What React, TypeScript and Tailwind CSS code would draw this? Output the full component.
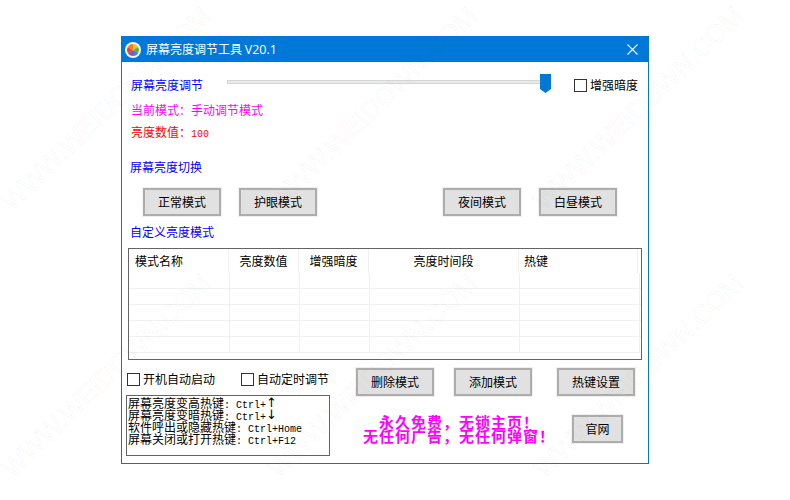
import React from "react";

const Btn = ({ children, className = "" }: { children: React.ReactNode; className?: string }) => (
  <button className={`h-[28px] w-[78px] shrink-0 border-2 border-[#adadad] bg-[#e1e1e1] text-[12px] leading-none text-black ring-1 ring-[#f0f0f0] ${className}`}>
    {children}
  </button>
);

const Check = ({ label, className = "" }: { label: string; className?: string }) => (
  <div className={`flex items-center gap-[3px] ${className}`}>
    <span className="h-[13px] w-[13px] shrink-0 border border-[#333333] bg-white" />
    <span className="text-[12px] leading-none text-black">{label}</span>
  </div>
);

const Logo = () => (
  <svg width="16" height="16" viewBox="0 0 16 16" className="shrink-0">
    <circle cx="8" cy="8" r="8" fill="#f4f4f4" />
    <path d="M8 8 L8 2 A6 6 0 0 1 13.2 5 Z" fill="#f5c518" />
    <path d="M8 8 L13.2 5 A6 6 0 0 1 13.2 11 Z" fill="#5cb531" />
    <path d="M8 8 L13.2 11 A6 6 0 0 1 8 14 Z" fill="#3f7fd0" />
    <path d="M8 8 L8 14 A6 6 0 0 1 2.8 11 Z" fill="#9a4fa8" />
    <path d="M8 8 L2.8 11 A6 6 0 0 1 2.8 5 Z" fill="#e2403f" />
    <path d="M8 8 L2.8 5 A6 6 0 0 1 8 2 Z" fill="#f57c1f" />
  </svg>
);

const cols = ["w-[101px]", "w-[70px]", "w-[70px]", "w-[150px]", "w-[120px]"];

const Row = () => (
  <div className="flex h-[16px] border-b border-[#f0f0f0]">
    {cols.map((c, i) => (
      <div key={i} className={`${c} shrink-0 border-r border-[#f0f0f0]`} />
    ))}
  </div>
);

const marks = [
  "left-[6px] top-[192px]",
  "left-[272px] top-[192px]",
  "left-[538px] top-[192px]",
  "left-[6px] top-[459px]",
  "left-[272px] top-[459px]",
  "left-[538px] top-[459px]",
];

const Arrow = ({ ch }: { ch: string }) => (
  <span className="inline-block h-[12px] w-[6px] overflow-visible align-top font-['DejaVu_Sans'] text-[13px] leading-[12px]">{ch}</span>
);

export default function App() {
  const cjk = { fontFamily: '"Noto Sans CJK SC", "Noto Sans", sans-serif' };
  const mono = "font-['Liberation_Mono'] text-[10px] leading-none";
  const line = "h-[12px] whitespace-nowrap";
  return (
    <div className="relative h-[500px] w-[790px] overflow-hidden bg-white pl-[121px] pt-[36px]" style={cjk}>
      <div className="flex h-[428px] w-[528px] flex-col border border-[#0078d7] bg-white">
        {/* title bar */}
        <div className="flex h-[25px] shrink-0 items-center bg-[#0078d7] pl-[3px] pr-[10px] text-white">
          <Logo />
          <span className="ml-[5px] text-[12px] leading-none">屏幕亮度调节工具 <span className="font-['Open_Sans'] text-[12.5px]">V20.1</span></span>
          <svg width="11" height="11" viewBox="0 0 11 11" className="ml-auto" stroke="white" strokeWidth="1.1">
            <path d="M0.5 0.5 L10.5 10.5 M10.5 0.5 L0.5 10.5" />
          </svg>
        </div>

        {/* slider row */}
        <div className="mt-[11px] flex h-[24px] items-center pl-[9px]">
          <span className="w-[96px] shrink-0 text-[12px] leading-none text-[#0000ff]">屏幕亮度调节</span>
          <div className="relative -mt-[7px] h-[4px] w-[318px] shrink-0 border border-[#d6d6d6] bg-[#e7eae7]">
            <svg width="11" height="19" viewBox="0 0 11 19" className="absolute -top-[7px] left-[312px]">
              <path d="M0 0 H11 V15 L5.5 19 L0 15 Z" fill="#0078d7" />
            </svg>
          </div>
          <Check label="增强暗度" className="ml-[29px]" />
        </div>

        <div className="mt-[5px] h-[16px] pl-[9px] text-[12px] leading-[16px] text-[#ff00ff]">当前模式：手动调节模式</div>
        <div className="mt-[6px] h-[16px] pl-[9px] text-[12px] leading-[16px] text-[#ff0000]">
          亮度数值：<span className="font-['Liberation_Mono'] text-[10px] leading-none">100</span>
        </div>
        <div className="mt-[19px] h-[16px] pl-[8px] text-[12px] leading-[16px] text-[#0000ff]">屏幕亮度切换</div>

        <div className="mt-[13px] flex pl-[21px]">
          <Btn>正常模式</Btn>
          <Btn className="ml-[18px]">护眼模式</Btn>
          <Btn className="ml-[126px]">夜间模式</Btn>
          <Btn className="ml-[18px]">白昼模式</Btn>
        </div>

        <div className="mt-[8px] h-[16px] pl-[8px] text-[12px] leading-[16px] text-[#0000ff]">自定义亮度模式</div>

        {/* table */}
        <div className="ml-[6px] mt-[8px] h-[112px] w-[514px] overflow-hidden border border-[#646464]">
          <div className="flex h-[24px] text-[12px] leading-none text-black">
            <div className="w-[100px] shrink-0 border-r border-[#f0f0f0] pl-[6px] pt-[6px]">模式名称</div>
            <div className="w-[70px] shrink-0 border-r border-[#f0f0f0] pt-[6px] text-center">亮度数值</div>
            <div className="w-[70px] shrink-0 border-r border-[#f0f0f0] pt-[6px] text-center">增强暗度</div>
            <div className="w-[150px] shrink-0 border-r border-[#f0f0f0] pt-[6px] text-center">亮度时间段</div>
            <div className="w-[119px] shrink-0 border-r border-[#f0f0f0] pl-[5px] pt-[6px]">热键</div>
          </div>
          <Row />
          <Row />
          <Row />
          <Row />
          <Row />
        </div>

        {/* bottom */}
        <div className="mt-[8px] flex">
          <div className="ml-[4px] w-[230px] shrink-0">
            <div className="flex h-[22px] items-center pl-[1px]">
              <Check label="开机自动启动" />
              <Check label="自动定时调节" className="ml-[26px]" />
            </div>
            <div className="mt-[5px] h-[61px] w-[204px] border border-[#646464] pl-[1px] pt-[1px] text-[12px] leading-[12px] text-black">
              <div className={line}>屏幕亮度变高热键<span className={mono}>: Ctrl+</span><Arrow ch="↑" /></div>
              <div className={line}>屏幕亮度变暗热键<span className={mono}>: Ctrl+</span><Arrow ch="↓" /></div>
              <div className={line}>软件呼出或隐藏热键<span className={mono}>: Ctrl+Home</span></div>
              <div className={line}>屏幕关闭或打开热键<span className={mono}>: Ctrl+F12</span></div>
            </div>
          </div>
          <div>
            <div className="flex">
              <Btn>删除模式</Btn>
              <Btn className="ml-[20px]">添加模式</Btn>
              <Btn className="ml-[25px]">热键设置</Btn>
            </div>
            <div className="mt-[19px] flex items-center">
              <div className="w-[206px] text-center text-[15px] font-bold leading-[14px] tracking-[1px] text-[#ff00ff]">
                <div className="h-[14px]">永久免费，无锁主页！</div>
                <div className="h-[14px]">无任何广告，无任何弹窗！</div>
              </div>
              <Btn className="ml-[10px] !w-[51px]">官网</Btn>
            </div>
          </div>
        </div>
      </div>

      {/* watermark overlay */}
      {marks.map((m) => (
        <div
          key={m}
          className={`pointer-events-none absolute ${m} origin-left -rotate-[44deg] whitespace-nowrap font-['Liberation_Sans'] text-[26px] leading-none text-transparent [-webkit-text-stroke:1px_rgba(0,0,0,0.04)]`}
        >
          WWW.WEIDOWN.COM
        </div>
      ))}
    </div>
  );
}
